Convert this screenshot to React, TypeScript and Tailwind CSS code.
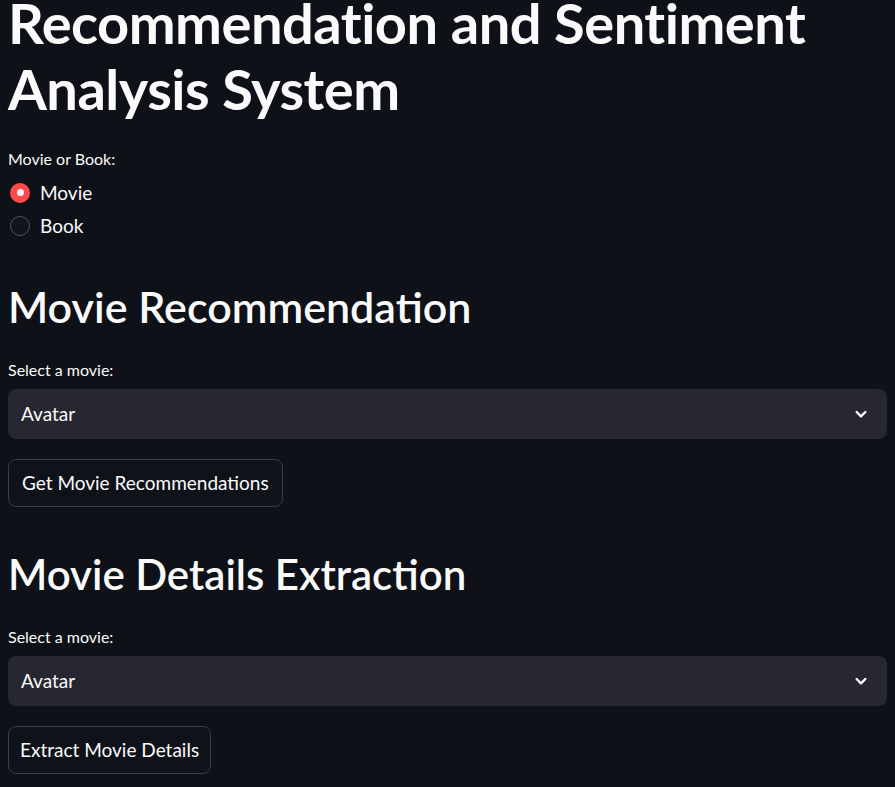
import React from "react";

function Chevron() {
  return (
    <svg width="16" height="16" viewBox="0 0 24 24" fill="none" stroke="#fafafa" strokeWidth="3.6" strokeLinecap="round" strokeLinejoin="round">
      <path d="M5.5 9l6.5 6.5 6.5-6.5" />
    </svg>
  );
}

function SelectBox({ value }: { value: string }) {
  return (
    <div className="h-[50px] rounded-[8px] bg-[#262730] flex items-center justify-between pl-[13px] pr-[18px]">
      <span className="text-[19px] text-[#fafafa]">{value}</span>
      <Chevron />
    </div>
  );
}

function Button({ children, px }: { children: React.ReactNode; px: string }) {
  return (
    <div>
      <button className={`h-[48px] ${px} rounded-[8px] border border-[#3b3d46] bg-[#0f1219] text-[19px] text-[#fafafa]`}>
        {children}
      </button>
    </div>
  );
}

export default function App() {
  return (
    <div
      className="min-h-[787px] w-full bg-[#0e1117] text-[#fafafa] px-[8px] overflow-hidden"
      style={{ fontFamily: "Lato, 'Open Sans', sans-serif" }}
    >
      <h1 className="text-[56px] font-bold leading-[66px] -mt-[10px] tracking-[-0.5px]">
        Recommendation and Sentiment Analysis System
      </h1>
      <div className="mt-[27px] text-[16px] leading-[20px]">Movie or Book:</div>
      <div className="mt-[12px] flex flex-col gap-[10px]">
        <label className="flex items-center gap-[10px] ml-[2px]">
          <span className="w-[20px] h-[20px] rounded-full bg-[#ff4b4b] flex items-center justify-center">
            <span className="w-[7px] h-[7px] rounded-full bg-[#f0f2f6]" />
          </span>
          <span className="text-[19px] leading-[23px]">Movie</span>
        </label>
        <label className="flex items-center gap-[10px] ml-[2px]">
          <span className="w-[20px] h-[20px] rounded-full border border-[#50535c] bg-[#12141b]" />
          <span className="text-[19px] leading-[23px]">Book</span>
        </label>
      </div>

      <h2 className="mt-[44px] text-[43px] font-semibold leading-[52px]">Movie Recommendation</h2>
      <div className="mt-[27px] text-[16px] leading-[20px]">Select a movie:</div>
      <div className="mt-[9px]">
        <SelectBox value="Avatar" />
      </div>
      <div className="mt-[20px]">
        <Button px="px-[13px]">Get Movie Recommendations</Button>
      </div>

      <h2 className="mt-[41px] text-[42px] font-semibold leading-[52px]">Movie Details Extraction</h2>
      <div className="mt-[27px] text-[16px] leading-[20px]">Select a movie:</div>
      <div className="mt-[9px]">
        <SelectBox value="Avatar" />
      </div>
      <div className="mt-[20px]">
        <Button px="px-[11px]">Extract Movie Details</Button>
      </div>
    </div>
  );
}
